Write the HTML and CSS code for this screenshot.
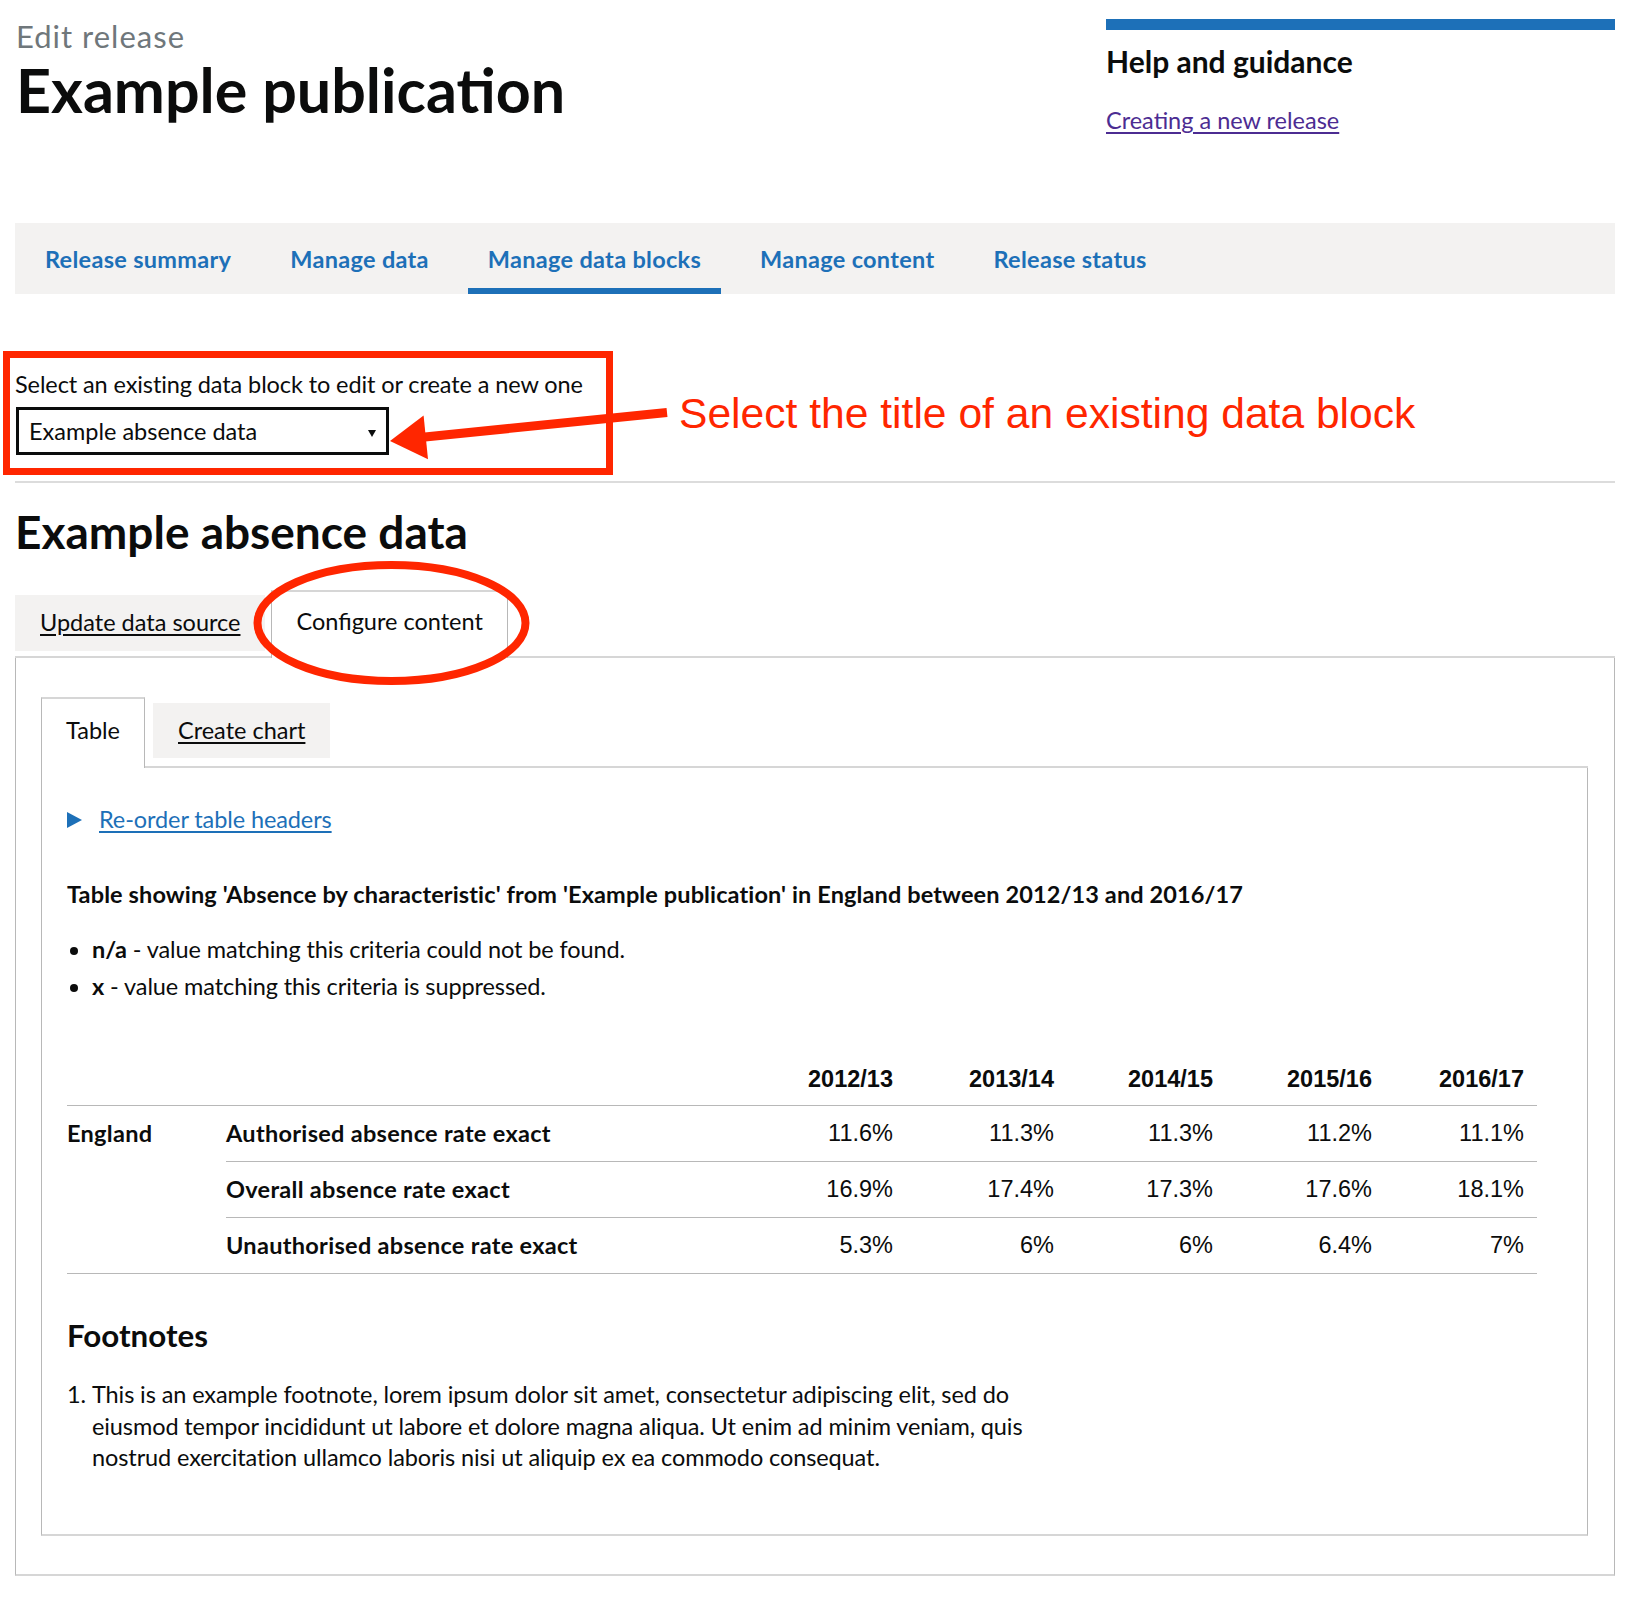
FILE: index.html
```html
<!DOCTYPE html>
<html lang="en">
<head>
<meta charset="utf-8">
<title>Edit release - Example publication</title>
<link rel="stylesheet" href="styles.css">
</head>
<body>
<div class="page">
  <header class="header">
    <div class="title-block">
      <span class="caption">Edit release</span>
      <h1 class="title">Example publication</h1>
    </div>
    <aside class="help">
      <h2 class="help-title">Help and guidance</h2>
      <a class="help-link" href="#">Creating a new release</a>
    </aside>
  </header>

  <nav class="nav">
    <a class="nav-item" href="#">Release summary</a>
    <a class="nav-item" href="#">Manage data</a>
    <a class="nav-item nav-item--active" href="#">Manage data blocks</a>
    <a class="nav-item" href="#">Manage content</a>
    <a class="nav-item" href="#">Release status</a>
  </nav>

  <div class="form-group">
    <label class="label">Select an existing data block to edit or create a new one</label>
    <div class="select"><span>Example absence data</span><span class="select-arrow"></span></div>
  </div>

  <hr class="rule">

  <h2 class="block-title">Example absence data</h2>

  <div class="tabs">
    <ul class="tab-list">
      <li class="tab"><a class="tab-link" href="#">Update data source</a></li>
      <li class="tab tab--selected"><span class="tab-link">Configure content</span></li>
    </ul>
    <section class="tab-panel">
      <ul class="tab-list tab-list--inner">
        <li class="tab tab--selected tab--inner-selected"><span class="tab-link">Table</span></li>
        <li class="tab tab--inner"><a class="tab-link" href="#">Create chart</a></li>
      </ul>
      <section class="tab-panel tab-panel--inner">
        <div class="details"><span class="details-marker"></span><a class="details-link" href="#">Re-order table headers</a></div>

        <p class="table-caption">Table showing 'Absence by characteristic' from 'Example publication' in England between 2012/13 and 2016/17</p>

        <ul class="key-list">
          <li><strong>n/a</strong> - value matching this criteria could not be found.</li>
          <li><strong>x</strong> - value matching this criteria is suppressed.</li>
        </ul>

        <table class="data-table">
          <colgroup>
            <col class="col-area"><col class="col-label"><col class="col-year"><col class="col-year2"><col class="col-year3"><col class="col-year3"><col class="col-last">
          </colgroup>
          <thead>
            <tr>
              <td class="cell-blank"></td>
              <td class="cell-blank"></td>
              <th class="num head">2012/13</th>
              <th class="num head">2013/14</th>
              <th class="num head">2014/15</th>
              <th class="num head">2015/16</th>
              <th class="num head last">2016/17</th>
            </tr>
          </thead>
          <tbody>
            <tr>
              <th class="row-head area" rowspan="3">England</th>
              <th class="row-head">Authorised absence rate exact</th>
              <td class="num">11.6%</td><td class="num">11.3%</td><td class="num">11.3%</td><td class="num">11.2%</td><td class="num last">11.1%</td>
            </tr>
            <tr>
              <th class="row-head">Overall absence rate exact</th>
              <td class="num">16.9%</td><td class="num">17.4%</td><td class="num">17.3%</td><td class="num">17.6%</td><td class="num last">18.1%</td>
            </tr>
            <tr>
              <th class="row-head">Unauthorised absence rate exact</th>
              <td class="num">5.3%</td><td class="num">6%</td><td class="num">6%</td><td class="num">6.4%</td><td class="num last">7%</td>
            </tr>
          </tbody>
        </table>

        <h3 class="footnotes-title">Footnotes</h3>
        <ol class="footnotes">
          <li>This is an example footnote, lorem ipsum dolor sit amet, consectetur adipiscing elit, sed do eiusmod tempor incididunt ut labore et dolore magna aliqua. Ut enim ad minim veniam, quis nostrud exercitation ullamco laboris nisi ut aliquip ex ea commodo consequat.</li>
        </ol>
      </section>
    </section>
  </div>

  <svg class="annotations" width="1628" height="1599" viewBox="0 0 1628 1599" aria-hidden="true">
    <rect x="6.5" y="354.5" width="603" height="117" fill="none" stroke="#ff2600" stroke-width="7"/>
    <line x1="420" y1="437.5" x2="667" y2="412.5" stroke="#ff2600" stroke-width="9"/>
    <polygon points="390,441 423.6,415.5 428,459.3" fill="#ff2600"/>
    <ellipse cx="391.5" cy="623" rx="134" ry="58" fill="none" stroke="#ff2600" stroke-width="8"/>
  </svg>
  <p class="annotation-text">Select the title of an existing data block</p>
</div>
</body>
</html>
```

FILE: styles.css
```css
* {
  box-sizing: border-box;
}

html,
body {
  margin: 0;
  padding: 0;
  background: #ffffff;
}

body {
  font-family: Lato, "Noto Sans", sans-serif;
  font-size: 23.5px;
  line-height: 31px;
  letter-spacing: -0.1px;
  color: #0b0c0c;
}

.page {
  position: relative;
  width: 1628px;
  min-height: 1599px;
  padding: 0 13px 0 15px;
}

/* Header */
.header {
  display: flex;
  justify-content: space-between;
  align-items: flex-start;
}

.title-block {
  padding-top: 18px;
  padding-left: 1px;
}

.caption {
  display: block;
  font-size: 31px;
  line-height: 37px;
  letter-spacing: 1px;
  color: #6f777b;
}

.title {
  margin: 3px 0 0;
  font-size: 61px;
  line-height: 64px;
  font-weight: 700;
  letter-spacing: 0;
}

.help {
  width: 509px;
  margin-top: 19px;
  border-top: 11px solid #1d70b8;
}

.help-title {
  margin: 13px 0 0;
  font-size: 30px;
  line-height: 37px;
  font-weight: 700;
  letter-spacing: 0;
}

.help-link {
  display: inline-block;
  margin-top: 25px;
  color: #4c2c92;
  text-decoration: underline;
  text-underline-offset: 3px;
  letter-spacing: 0;
}

/* Navigation */
.nav {
  margin-top: 87px;
  height: 71px;
  display: flex;
  padding-left: 10px;
  background: #f3f2f1;
}

.nav-item {
  padding: 21px 20px 13px;
  margin-right: 19px;
  border-bottom: 6px solid transparent;
  color: #1d70b8;
  font-weight: 700;
  letter-spacing: 0.3px;
  text-decoration: none;
}

.nav-item--active {
  border-bottom-color: #1d70b8;
}

/* Data block select */
.form-group {
  margin-top: 75px;
}

.label {
  display: block;
}

.select {
  margin-top: 7px;
  margin-left: 1px;
  width: 373px;
  height: 48px;
  border: 3px solid #0b0c0c;
  padding: 0 10px;
  display: flex;
  align-items: center;
  justify-content: space-between;
  letter-spacing: 0;
}

.select-arrow {
  width: 0;
  height: 0;
  border-left: 4px solid transparent;
  border-right: 4px solid transparent;
  border-top: 7px solid #0b0c0c;
  margin-top: 4px;
}

.rule {
  margin: 26px 0 0;
  border: 0;
  border-top: 2px solid #dcdcdc;
}

.block-title {
  margin: 24px 0 0;
  font-size: 46px;
  line-height: 50px;
  font-weight: 700;
  letter-spacing: 0;
}

/* Tabs */
.tabs {
  margin-top: 33px;
}

.tab-list {
  display: flex;
  align-items: flex-end;
  margin: 0;
  padding: 0;
  list-style: none;
  border-bottom: 2px solid #d6d6d6;
}

.tab {
  margin: 0 6px 5px 0;
  padding: 12px 25px 13px;
  background: #f3f2f1;
  letter-spacing: 0;
}

.tab-link {
  color: #0b0c0c;
  text-decoration: underline;
  text-underline-offset: 3px;
}

.tab--selected {
  margin-bottom: -2px;
  padding: 14px 24px 21px;
  background: #ffffff;
  border-top: 2px solid #d6d6d6;
  border-left: 1px solid #b8b8b8;
  border-right: 1px solid #b8b8b8;
}

.tab--selected .tab-link {
  text-decoration: none;
}

.tab-panel {
  padding: 39px 26px 38px 25px;
  border-left: 1px solid #b8b8b8;
  border-right: 1px solid #b8b8b8;
  border-bottom: 2px solid #d6d6d6;
}

.tab--inner-selected {
  padding: 16px 24px 22px;
}

.tab--inner {
  margin-bottom: 8px;
  padding: 12px 25px 12px;
  margin-left: 2px;
}

.tab-panel--inner {
  padding: 36px 25px 60px 25px;
}

/* Details */
.details {
  display: flex;
  align-items: center;
}

.details-marker {
  width: 0;
  height: 0;
  border-left: 15px solid #1d70b8;
  border-top: 8px solid transparent;
  border-bottom: 8px solid transparent;
  margin-right: 17px;
}

.details-link {
  color: #1d70b8;
  text-decoration: underline;
  text-underline-offset: 3px;
}

.table-caption {
  margin: 44px 0 0;
  font-weight: 700;
  letter-spacing: 0.12px;
}

.key-list {
  margin: 24px 0 0;
  padding-left: 25px;
  list-style: disc;
}

.key-list li {
  margin-bottom: 6px;
}

/* Table */
.data-table {
  margin-top: 48px;
  width: 1470px;
  table-layout: fixed;
  border-collapse: collapse;
  border-spacing: 0;
}

.col-area { width: 159px; }
.col-label { width: 532px; }
.col-year { width: 160px; }
.col-year2 { width: 161px; }
.col-year3 { width: 159px; }
.col-last { width: 140px; }

.data-table th,
.data-table td {
  padding: 12px 25px 12px 0;
  line-height: 31px;
  border-bottom: 1px solid #b8b8b8;
  text-align: left;
  vertical-align: top;
}

.data-table thead th,
.data-table thead td {
  padding-top: 14px;
  padding-bottom: 10px;
}

.row-head {
  font-weight: 700;
  letter-spacing: 0.3px;
}

.num {
  font-family: "Liberation Sans", Arial, sans-serif;
  text-align: right !important;
  font-weight: 400;
  letter-spacing: 0;
}

.num.head {
  font-weight: 700;
}

.num.last {
  padding-right: 13px !important;
}

.footnotes-title {
  margin: 43px 0 0;
  font-size: 31.3px;
  line-height: 37px;
  font-weight: 700;
  letter-spacing: 0;
}

.footnotes {
  margin: 25px 0 0;
  padding-left: 25px;
  max-width: 980px;
  line-height: 31.5px;
}

/* Annotation overlay */
.annotations {
  position: absolute;
  top: 0;
  left: 0;
  pointer-events: none;
}

.annotation-text {
  position: absolute;
  top: 389px;
  left: 679px;
  margin: 0;
  font-family: "Liberation Sans", Arial, sans-serif;
  font-size: 42.6px;
  line-height: 48px;
  letter-spacing: 0;
  color: #ff2600;
  white-space: nowrap;
}
```
